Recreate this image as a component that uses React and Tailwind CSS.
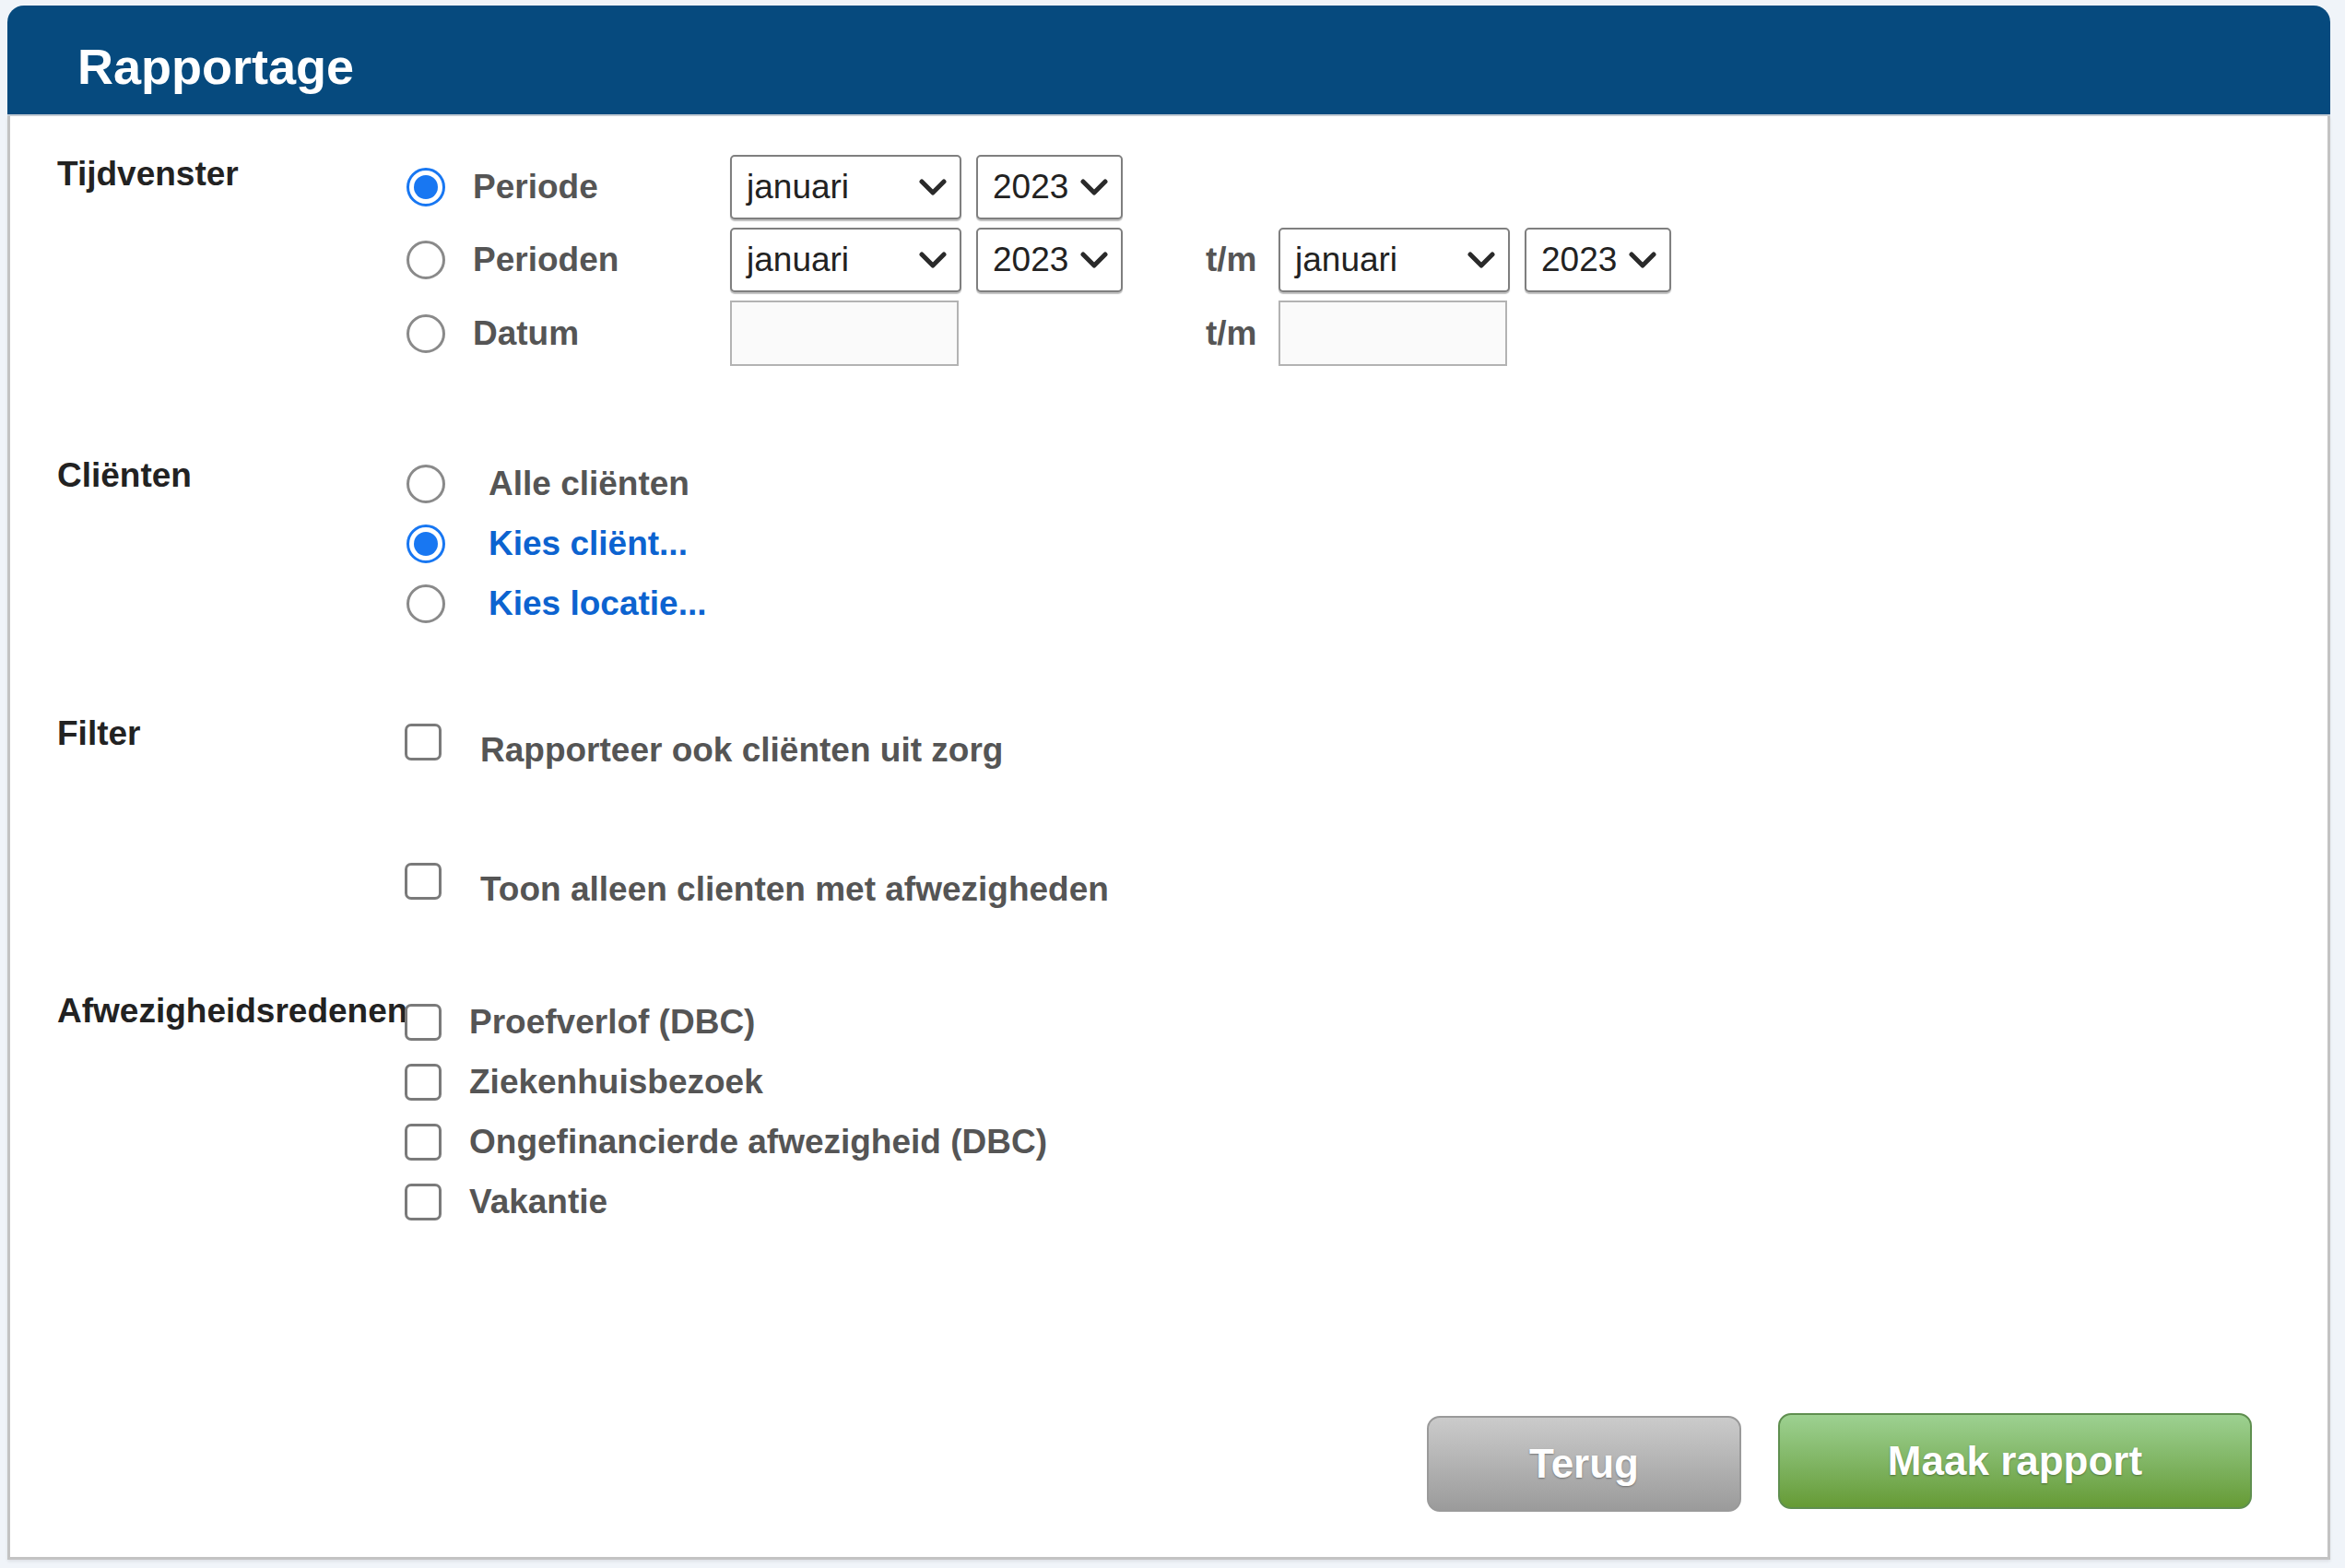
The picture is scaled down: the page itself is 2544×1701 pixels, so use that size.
import React from 'react';

const font = { fontFamily: '"Liberation Sans", Arial, Helvetica, sans-serif' };

function Chevron() {
  return (
    <svg width="30" height="20" viewBox="0 0 30 20" fill="none" className="shrink-0">
      <path d="M3 4l12 12L27 4" stroke="#2a2a2a" strokeWidth="5" strokeLinecap="round" strokeLinejoin="round" />
    </svg>
  );
}

function Select({ value, w }) {
  return (
    <div
      className={`${w} h-[70px] flex items-center justify-between pl-[16px] pr-[14px] bg-white border-2 border-[#7f7f7f] rounded-[5px] shadow-[0_2px_1px_rgba(0,0,0,0.25)] text-[37px] text-[#222]`}
    >
      <span>{value}</span>
      <Chevron />
    </div>
  );
}

function DateInput() {
  return <div className="w-[248px] h-[71px] bg-[#fafafa] border-2 border-[#b3b3b3]" />;
}

function Radio({ checked }) {
  return checked ? (
    <div className="w-[42px] h-[42px] ml-[3px] shrink-0 rounded-full border-[3px] border-[#1877f2] flex items-center justify-center bg-white">
      <div className="w-[26px] h-[26px] rounded-full bg-[#1877f2]" />
    </div>
  ) : (
    <div className="w-[42px] h-[42px] ml-[3px] shrink-0 rounded-full border-[3px] border-[#8a8a8a] bg-white" />
  );
}

function Checkbox() {
  return <div className="relative z-10 w-[40px] h-[40px] ml-[1px] shrink-0 rounded-[7px] border-[3px] border-[#7a7a7a] bg-white" />;
}

function Tm() {
  return <div className="w-[169px] pl-[90px] text-[37px] font-bold text-[#555]">t/m</div>;
}

export default function App() {
  const reasons = ['Proefverlof (DBC)', 'Ziekenhuisbezoek', 'Ongefinancierde afwezigheid (DBC)', 'Vakantie'];

  return (
    <div className="min-h-screen bg-[#f0f4f9] pt-[6px] pl-[8px]" style={font}>
      <div className="w-[2520px]">
        {/* header */}
        <div className="h-[120px] bg-[#064a7e] rounded-t-[18px] flex items-center pl-[76px] pt-[14px] border-b-2 border-[#c5ccd4]">
          <h1 className="text-[54px] font-bold text-white">Rapportage</h1>
        </div>

        <div className="bg-white border-x-[3px] border-b-[3px] border-[#c3c3c3] shadow-[0_2px_3px_rgba(0,0,0,0.08)] pl-[51px] pt-[42px] pb-[49px] flex flex-col">
          {/* Tijdvenster */}
          <div className="flex">
            <div className="w-[376px] shrink-0 text-[37px] leading-[42px] font-bold text-[#222]">Tijdvenster</div>
            <div className="flex flex-col gap-[9px]">
              <div className="flex items-center h-[70px]">
                <div className="w-[354px] flex items-center">
                  <Radio checked />
                  <span className="ml-[30px] text-[37px] font-bold text-[#555]">Periode</span>
                </div>
                <Select value="januari" w="w-[251px]" />
                <div className="ml-[16px]">
                  <Select value="2023" w="w-[159px]" />
                </div>
              </div>
              <div className="flex items-center h-[70px]">
                <div className="w-[354px] flex items-center">
                  <Radio />
                  <span className="ml-[30px] text-[37px] font-bold text-[#555]">Perioden</span>
                </div>
                <Select value="januari" w="w-[251px]" />
                <div className="ml-[16px]">
                  <Select value="2023" w="w-[159px]" />
                </div>
                <Tm />
                <Select value="januari" w="w-[251px]" />
                <div className="ml-[16px]">
                  <Select value="2023" w="w-[159px]" />
                </div>
              </div>
              <div className="flex items-center h-[71px]">
                <div className="w-[354px] flex items-center">
                  <Radio />
                  <span className="ml-[30px] text-[37px] font-bold text-[#555]">Datum</span>
                </div>
                <DateInput />
                <div className="w-[178px]" />
                <Tm />
                <DateInput />
              </div>
            </div>
          </div>

          {/* Cliënten */}
          <div className="flex mt-[95px]">
            <div className="w-[376px] shrink-0 pt-[3px] text-[37px] leading-[42px] font-bold text-[#222]">Cliënten</div>
            <div className="flex flex-col">
              <div className="flex items-center h-[65px]">
                <Radio />
                <span className="ml-[47px] text-[37px] font-bold text-[#555]">Alle cliënten</span>
              </div>
              <div className="flex items-center h-[65px]">
                <Radio checked />
                <span className="ml-[47px] text-[37px] font-bold text-[#0c63d0]">Kies cliënt...</span>
              </div>
              <div className="flex items-center h-[65px]">
                <Radio />
                <span className="ml-[47px] text-[37px] font-bold text-[#0c63d0]">Kies locatie...</span>
              </div>
            </div>
          </div>

          {/* Filter */}
          <div className="flex mt-[97px]">
            <div className="w-[376px] shrink-0 -mt-[9px] text-[37px] leading-[42px] font-bold text-[#222]">Filter</div>
            <div className="flex flex-col gap-[109px]">
              <div className="flex items-center h-[42px]">
                <Checkbox />
                <span className="ml-[42px] pt-[18px] text-[37px] font-bold text-[#555]">Rapporteer ook cliënten uit zorg</span>
              </div>
              <div className="flex items-center h-[42px]">
                <Checkbox />
                <span className="ml-[42px] pt-[18px] text-[37px] font-bold text-[#555]">Toon alleen clienten met afwezigheden</span>
              </div>
            </div>
          </div>

          {/* Afwezigheidsredenen */}
          <div className="flex mt-[99px]">
            <div className="w-[376px] shrink-0 whitespace-nowrap text-[37px] leading-[42px] font-bold text-[#222]">
              Afwezigheidsredenen
            </div>
            <div className="flex flex-col">
              {reasons.map((r) => (
                <div key={r} className="flex items-center h-[65px]">
                  <Checkbox />
                  <span className="ml-[30px] text-[37px] font-bold text-[#555]">{r}</span>
                </div>
              ))}
            </div>
          </div>

          {/* buttons */}
          <div className="flex justify-end items-end mt-[197px] pr-[82px]">
            <button className="w-[341px] h-[104px] mr-[40px] rounded-[14px] border-2 border-[#9a9a9a] bg-gradient-to-b from-[#cbcbcb] to-[#9b9b9b] text-white text-[44px] font-bold [text-shadow:0_1px_2px_rgba(0,0,0,0.35)]">
              Terug
            </button>
            <button className="w-[514px] h-[104px] mb-[3px] rounded-[14px] border-2 border-[#5f8f4f] bg-gradient-to-b from-[#9dd191] to-[#669b34] text-white text-[44px] font-bold [text-shadow:0_1px_2px_rgba(0,0,0,0.35)]">
              Maak rapport
            </button>
          </div>
        </div>
      </div>
    </div>
  );
}
